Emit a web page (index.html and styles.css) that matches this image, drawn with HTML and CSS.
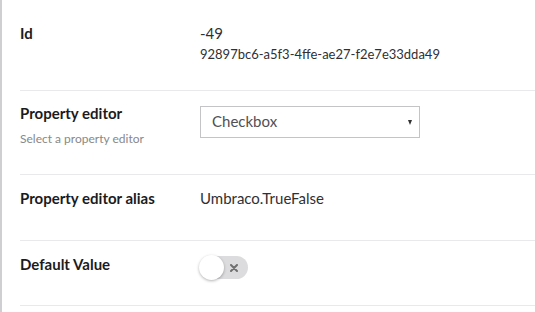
FILE: index.html
```html
<!DOCTYPE html>
<html lang="en">
<head>
    <meta charset="UTF-8">
    <meta name="viewport" content="width=device-width, initial-scale=1.0">
    <title>Data type</title>
    <link rel="stylesheet" href="styles.css">
</head>
<body>
    <div class="panel">
        <div class="row row-id">
            <div class="label">Id</div>
            <div class="value">
                <div>-49</div>
                <div class="guid">92897bc6-a5f3-4ffe-ae27-f2e7e33dda49</div>
            </div>
        </div>
        <div class="row row-editor">
            <div>
                <div class="label">Property editor</div>
                <div class="desc">Select a property editor</div>
            </div>
            <div class="value">
                <div class="select">
                    <span>Checkbox</span>
                    <span class="caret"></span>
                </div>
            </div>
        </div>
        <div class="row">
            <div class="label">Property editor alias</div>
            <div class="value">Umbraco.TrueFalse</div>
        </div>
        <div class="row row-default">
            <div class="label">Default Value</div>
            <div class="value">
                <div class="switch">
                    <span class="knob"></span>
                    <svg class="cross" width="8" height="8" viewBox="0 0 8 8">
                        <path d="M1 1 L7 7 M7 1 L1 7" stroke="#707070" stroke-width="2" stroke-linecap="round"/>
                    </svg>
                </div>
            </div>
        </div>
    </div>
</body>
</html>
```

FILE: styles.css
```css
body { margin: 0; font-family: Lato, "Open Sans", sans-serif; background: #fff; }
.panel { border-left: 2px solid #cfcfd1; padding-left: 18px; min-height: 312px; box-sizing: border-box; }
.row { display: grid; grid-template-columns: 180px 1fr; align-items: start; padding: 13px 0 32px; border-bottom: 1px solid #e9e9eb; }
.row-id { padding: 23px 0 27px; }
.row-editor { padding: 12px 0 25px; }
.row-default { padding-bottom: 26px; }
.label { font-size: 15px; line-height: 20px; font-weight: 700; color: #1b1b1d; }
.desc { margin-top: 6px; font-size: 12px; line-height: 20px; color: #88888a; }
.value { font-size: 15px; line-height: 20px; color: #303033; }
.guid { margin-top: 2px; font-size: 13px; line-height: 18px; }
.select { margin-top: 3px; width: 220px; height: 32px; box-sizing: border-box; border: 1px solid #c4c4c6; display: flex; align-items: center; justify-content: space-between; padding: 0 7px 2px 11px; font-size: 15px; color: #515054; }
.caret { width: 0; height: 0; border-left: 2.5px solid transparent; border-right: 2.5px solid transparent; border-top: 5px solid #333; margin-top: 2px; }
.switch { position: relative; margin: 2px 0 0 2px; width: 46px; height: 23px; border-radius: 12px; background: #dcdcde; display: flex; align-items: center; justify-content: flex-end; padding-right: 10px; box-sizing: border-box; }
.knob { position: absolute; left: -3px; top: -1px; width: 25px; height: 25px; border-radius: 50%; background: #fff; box-shadow: 0 1px 3px rgba(0,0,0,0.3); }
```
